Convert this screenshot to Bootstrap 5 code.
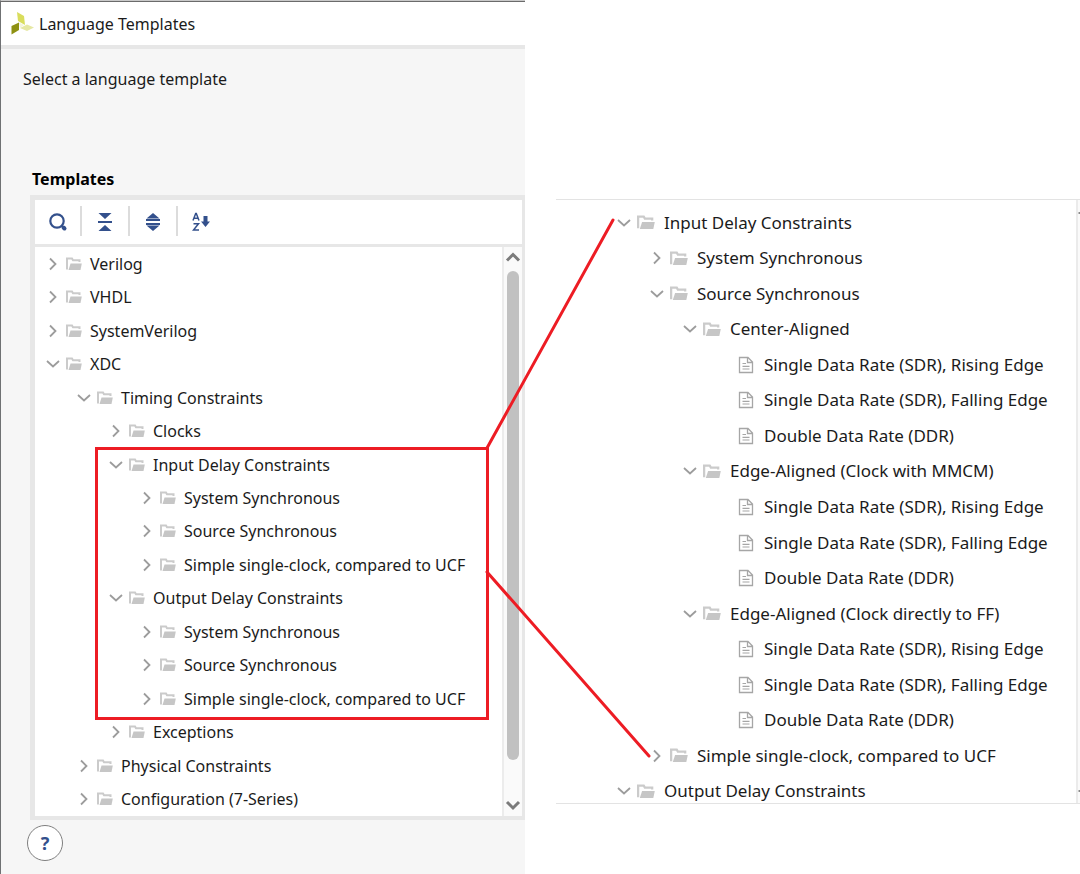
<!DOCTYPE html>
<html lang="en">
<head>
<meta charset="utf-8">
<meta name="viewport" content="width=device-width, initial-scale=1">
<title>Language Templates</title>
<link href="https://cdn.jsdelivr.net/npm/bootstrap@5.3.0/dist/css/bootstrap.min.css" rel="stylesheet">
<style>
  :root { --frame: #e7e7e7; --ink: #1b1b1b; --accent: #33508c; }
  body { font-family: "Noto Sans", "Open Sans", sans-serif; font-size: 16px; line-height: 24px; color: var(--ink); background: #fff; }
  .stage { display: grid; grid-template-columns: 525fr 555fr; min-height: 100vh; }
  .dialog-pane { background: #f6f6f6; border-left: 1px solid #6f7173; border-top: 1px solid #c9c9c9; }
  .title-strip { height: 48px; background: #fff; border-top: 1px solid #6b6b6b; border-bottom: 4px solid var(--frame); padding: 0 10px 0 9px; }
  .title-strip h1, .section-title { font-size: 16px; line-height: 24px; margin: 0; }
  .title-strip h1 { font-weight: 400; }
  .intro { padding: 18px 22px 0; }
  .section-title { font-weight: 700; color: #000; padding: 76px 31px 4px; }
  .panel-box { margin-left: 29px; border: 5px solid var(--frame); border-right-width: 3px; border-bottom-width: 4px; background: #fff; }
  .tool-row { height: 47px; border-bottom: 3px solid var(--frame); padding: 0 8px 3px 0; }
  .tool-row button { width: 45px; height: 30px; padding: 0; border: 0; background: none; color: var(--accent); }
  .tool-row button + button { width: 48px; border-left: 2px solid #dcdcdc; }
  .tree-list { display: grid; grid-auto-rows: 1fr; list-style: none; margin: 0; padding: 0; white-space: nowrap; }
  .tree-list li { display: flex; align-items: center; min-width: 0; }
  .tree-list svg { flex: none; color: #bdbdbd; }
  .left-tree { min-height: 569px; }
  .left-tree li { padding-left: 11px; }
  .left-tree .l2 { padding-left: 42px; }
  .left-tree .l3 { padding-left: 74px; }
  .left-tree .l4 { padding-left: 105px; }
  .tree-list .chev { width: 14px; height: 14px; color: #9c9c9c; margin-right: 6px; }
  .tree-list .fold { width: 16px; height: 16px; margin-right: 8px; }
  .scroller { width: 20px; flex: none; border-left: 2px solid #ececec; background: #fafafa; padding-right: 1px; }
  .scroller button { border: 0; padding: 0; background: none; height: 24px; display: flex; color: #7b7b7b; }
  .scroller button:first-child { padding-top: 4px; }
  .scroller button:last-child { align-items: end; padding-bottom: 5px; }
  .thumb { width: 12px; border-radius: 6px; background: #c1c1c1; flex: 1; margin-bottom: 32px; }
  .help-btn { width: 36px; height: 36px; margin: 5px 0 13px 26px; border: 1px solid #7f7f7f; background: #fff; color: var(--accent); font-size: 18px; line-height: 24px; font-weight: 700; padding: 0; }
  .detail-pane { padding: 199px 0 0 31px; font-size: 17px; }
  .detail-box { height: 605px; border-top: 1px solid #e3e3e3; border-bottom: 1px solid #e3e3e3; overflow: hidden; }
  .right-tree { height: 604px; margin-top: 5px; }
  .right-tree li { padding-left: 61px; }
  .right-tree .l2 { padding-left: 94px; }
  .right-tree .l3 { padding-left: 127px; }
  .right-tree .l4 { padding-left: 182px; }
  .right-tree .chev { margin-right: 6px; }
  .right-tree .fold { width: 18px; height: 17px; margin-right: 9px; }
  .right-tree .leaf { width: 16px; height: 18px; margin-right: 10px; color: #a6a6a6; }
  .edge-bar { width: 4px; flex: none; border-left: 2px solid #ebebeb; background: #fafafa; }
  .callout-lines { position: absolute; inset: 0; width: 100%; height: 874px; pointer-events: none; }
</style>
</head>
<body>
<svg class="d-none" aria-hidden="true">
  <symbol id="right" viewBox="0 0 14 14"><path d="M4 1.5 9.500 7 4 12.500" fill="none" stroke="currentColor" stroke-width="1.800"/></symbol>
  <symbol id="down" viewBox="0 0 14 14"><path d="M1 4 7 9.500 13 4" fill="none" stroke="currentColor" stroke-width="1.800"/></symbol>
  <symbol id="folder" viewBox="0 0 16 16" preserveAspectRatio="none"><path d="M1 13.500V2.500H6L7 4.300H13.500V6" fill="none" stroke="#cbcbcb" stroke-width="2"/><path d="M4.500 7.500H15.800L14.500 14H2.500z" fill="#c6c6c6"/></symbol>
  <symbol id="file" viewBox="0 0 16 18"><path d="M1.500 1.500H10L14.500 6V16.500H1.500zM9.500 1.500V6.500H14.500" fill="none" stroke="currentColor" stroke-width="1.300"/><path d="M4.500 7.500H8M4.500 10.300H11.500M4.500 13H11.500" stroke="currentColor" stroke-width="1.200"/></symbol>
</svg>

<main class="stage position-relative">
  <section class="dialog-pane">
    <header class="title-strip d-flex align-items-center gap-1">
      <svg width="25" height="26" viewBox="0 0 25 26" aria-hidden="true"><path d="M7 1 14 5 15 14 8 10z" fill="#d9dd5c"/><path d="M9 11.500V19L1.500 23.500V15z" fill="#8e9112"/><path d="M10 17 17 13.500 24 16.500 17 20z" fill="#e6e8a4"/><path d="M9 11.500 14 14 10 17z" fill="#f3f4dc"/></svg>
      <h1>Language Templates</h1>
    </header>
    <p class="intro mb-0">Select a language template</p>
    <h2 class="section-title">Templates</h2>

    <div class="panel-box">
      <div class="tool-row d-flex align-items-center">
        <button type="button" aria-label="Search"><svg width="20" height="20" viewBox="0 0 20 20"><circle cx="9" cy="9" r="6.700" fill="none" stroke="currentColor" stroke-width="2.200"/><path d="M15.500 15.500 16.500 16.500" stroke="currentColor" stroke-width="4" stroke-linecap="round"/></svg></button>
        <button type="button" aria-label="Collapse all"><svg width="16" height="20" viewBox="0 0 16 20"><path d="M1.500 1H14.500L8 7zM1.500 19H14.500L8 13zM1 9H15V11H1z" fill="currentColor"/></svg></button>
        <button type="button" aria-label="Expand all"><svg width="16" height="20" viewBox="0 0 16 20"><path d="M8 1 14.500 6.500H1.500zM8 19 14.500 13.500H1.500z" fill="currentColor"/><path d="M1 8H15M1 12H15" stroke="currentColor" stroke-width="2"/></svg></button>
        <button type="button" aria-label="Sort alphabetically"><svg width="18" height="20" viewBox="0 0 18 20"><path d="M1 8.500 3.700 1.500H4.300L7 8.500M2 6.300H6M1.500 11.800H6.500L1.500 18H7" fill="none" stroke="currentColor" stroke-width="1.500"/><path d="M11.500 4H15.500V9.500H18L13.500 15 9 9.500H11.500z" fill="currentColor"/></svg></button>
      </div>
      <div class="d-flex">
        <ul class="tree-list left-tree flex-grow-1" aria-label="Templates">
          <li><svg class="chev"><use href="#right"/></svg><svg class="fold"><use href="#folder"/></svg>Verilog</li>
          <li><svg class="chev"><use href="#right"/></svg><svg class="fold"><use href="#folder"/></svg>VHDL</li>
          <li><svg class="chev"><use href="#right"/></svg><svg class="fold"><use href="#folder"/></svg>SystemVerilog</li>
          <li><svg class="chev"><use href="#down"/></svg><svg class="fold"><use href="#folder"/></svg>XDC</li>
          <li class="l2"><svg class="chev"><use href="#down"/></svg><svg class="fold"><use href="#folder"/></svg>Timing Constraints</li>
          <li class="l3"><svg class="chev"><use href="#right"/></svg><svg class="fold"><use href="#folder"/></svg>Clocks</li>
          <li class="l3"><svg class="chev"><use href="#down"/></svg><svg class="fold"><use href="#folder"/></svg>Input Delay Constraints</li>
          <li class="l4"><svg class="chev"><use href="#right"/></svg><svg class="fold"><use href="#folder"/></svg>System Synchronous</li>
          <li class="l4"><svg class="chev"><use href="#right"/></svg><svg class="fold"><use href="#folder"/></svg>Source Synchronous</li>
          <li class="l4"><svg class="chev"><use href="#right"/></svg><svg class="fold"><use href="#folder"/></svg>Simple single-clock, compared to UCF</li>
          <li class="l3"><svg class="chev"><use href="#down"/></svg><svg class="fold"><use href="#folder"/></svg>Output Delay Constraints</li>
          <li class="l4"><svg class="chev"><use href="#right"/></svg><svg class="fold"><use href="#folder"/></svg>System Synchronous</li>
          <li class="l4"><svg class="chev"><use href="#right"/></svg><svg class="fold"><use href="#folder"/></svg>Source Synchronous</li>
          <li class="l4"><svg class="chev"><use href="#right"/></svg><svg class="fold"><use href="#folder"/></svg>Simple single-clock, compared to UCF</li>
          <li class="l3"><svg class="chev"><use href="#right"/></svg><svg class="fold"><use href="#folder"/></svg>Exceptions</li>
          <li class="l2"><svg class="chev"><use href="#right"/></svg><svg class="fold"><use href="#folder"/></svg>Physical Constraints</li>
          <li class="l2"><svg class="chev"><use href="#right"/></svg><svg class="fold"><use href="#folder"/></svg>Configuration (7-Series)</li>
        </ul>
        <div class="scroller d-flex flex-column align-items-center">
          <button type="button" aria-label="Scroll up"><svg width="16" height="12" viewBox="0 0 16 12"><path d="M2 9.500 8 3.500 14 9.500" fill="none" stroke="currentColor" stroke-width="3"/></svg></button>
          <div class="thumb"></div>
          <button type="button" aria-label="Scroll down"><svg width="16" height="12" viewBox="0 0 16 12"><path d="M2 3 8 9 14 3" fill="none" stroke="currentColor" stroke-width="3"/></svg></button>
        </div>
      </div>
    </div>
    <button type="button" class="help-btn rounded-circle" aria-label="Help">?</button>
  </section>

  <section class="detail-pane">
    <div class="detail-box d-flex">
      <ul class="tree-list right-tree flex-grow-1" aria-label="Delay constraint templates">
        <li><svg class="chev"><use href="#down"/></svg><svg class="fold"><use href="#folder"/></svg>Input Delay Constraints</li>
        <li class="l2"><svg class="chev"><use href="#right"/></svg><svg class="fold"><use href="#folder"/></svg>System Synchronous</li>
        <li class="l2"><svg class="chev"><use href="#down"/></svg><svg class="fold"><use href="#folder"/></svg>Source Synchronous</li>
        <li class="l3"><svg class="chev"><use href="#down"/></svg><svg class="fold"><use href="#folder"/></svg>Center-Aligned</li>
        <li class="l4"><svg class="leaf"><use href="#file"/></svg>Single Data Rate (SDR), Rising Edge</li>
        <li class="l4"><svg class="leaf"><use href="#file"/></svg>Single Data Rate (SDR), Falling Edge</li>
        <li class="l4"><svg class="leaf"><use href="#file"/></svg>Double Data Rate (DDR)</li>
        <li class="l3"><svg class="chev"><use href="#down"/></svg><svg class="fold"><use href="#folder"/></svg>Edge-Aligned (Clock with MMCM)</li>
        <li class="l4"><svg class="leaf"><use href="#file"/></svg>Single Data Rate (SDR), Rising Edge</li>
        <li class="l4"><svg class="leaf"><use href="#file"/></svg>Single Data Rate (SDR), Falling Edge</li>
        <li class="l4"><svg class="leaf"><use href="#file"/></svg>Double Data Rate (DDR)</li>
        <li class="l3"><svg class="chev"><use href="#down"/></svg><svg class="fold"><use href="#folder"/></svg>Edge-Aligned (Clock directly to FF)</li>
        <li class="l4"><svg class="leaf"><use href="#file"/></svg>Single Data Rate (SDR), Rising Edge</li>
        <li class="l4"><svg class="leaf"><use href="#file"/></svg>Single Data Rate (SDR), Falling Edge</li>
        <li class="l4"><svg class="leaf"><use href="#file"/></svg>Double Data Rate (DDR)</li>
        <li class="l2"><svg class="chev"><use href="#right"/></svg><svg class="fold"><use href="#folder"/></svg>Simple single-clock, compared to UCF</li>
        <li><svg class="chev"><use href="#down"/></svg><svg class="fold"><use href="#folder"/></svg>Output Delay Constraints</li>
      </ul>
      <div class="edge-bar"></div>
    </div>
  </section>

  <!-- highlight frame and the two lines that lead to the expanded tree -->
  <svg class="callout-lines" viewBox="0 0 1080 874" preserveAspectRatio="none" aria-hidden="true">
    <g fill="none" stroke="#ed1c24" stroke-width="3">
      <path d="M96.500 448.500H487.500V718.500H96.500z"/>
      <path d="M487 448 613 220M487 572 649 756" stroke-linecap="round"/>
    </g>
    <path d="M1078.500 213H1080M1078.500 791H1080" stroke="#8a8a8a" stroke-width="2"/>
  </svg>
</main>
<script src="https://cdn.jsdelivr.net/npm/bootstrap@5.3.0/dist/js/bootstrap.bundle.min.js"></script>
</body>
</html>
